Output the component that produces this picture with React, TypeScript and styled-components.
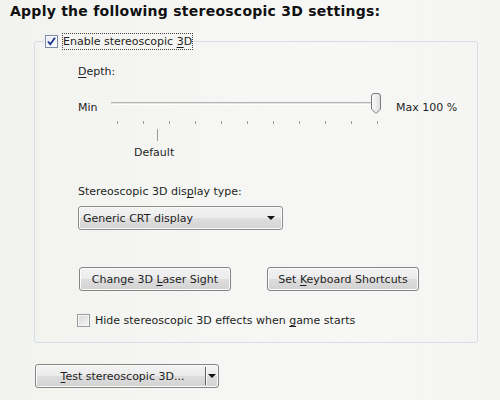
import styled, { createGlobalStyle } from 'styled-components';

const GlobalStyle = createGlobalStyle`
  html, body {
    margin: 0;
    padding: 0;
  }

  body {
    background: linear-gradient(to right, #f2f3ef 0%, #f6f7f4 45%, #f7f8f5 70%, #f4f5f2 100%);
    font-family: "DejaVu Sans", "Liberation Sans", sans-serif;
    font-size: 11px;
    color: #1e1f24;
  }
`;

const Page = styled.div`
  width: 500px;
  height: 400px;
  box-sizing: border-box;
  padding: 3px 0 0 10px;
  overflow: hidden;
`;

const Heading = styled.h1`
  margin: 0;
  font-size: 14px;
  line-height: 17px;
  font-weight: bold;
  letter-spacing: 0.25px;
  color: #111;
`;

const Group = styled.fieldset`
  margin: 13px 0 0 24px;
  padding: 0;
  width: 444px;
  height: 310px;
  box-sizing: border-box;
  border: 1px solid #d5dee5;
  border-radius: 3px;
  min-inline-size: 0;
`;

const Legend = styled.legend`
  margin-left: 9px;
  padding: 0 1px;
  display: flex;
  align-items: center;
`;

const Box = styled.span<{ $checked?: boolean }>`
  width: 13px;
  height: 13px;
  box-sizing: border-box;
  flex-shrink: 0;
  display: flex;
  align-items: center;
  justify-content: center;
  border: 1px solid ${({ $checked }) => ($checked ? '#7d8ca8' : '#9a9a9a')};
  background: ${({ $checked }) =>
    $checked
      ? 'linear-gradient(135deg, #e3eaf3, #ffffff)'
      : 'linear-gradient(135deg, #d8d8d8, #f4f4f4)'};
  box-shadow: inset 0 0 0 1px #f6f8fb;
`;

const FocusLabel = styled.span`
  margin-left: 4px;
  padding: 1px 0;
  border: 1px dotted #444;
  line-height: 13px;
  white-space: nowrap;
`;

const Body = styled.div`
  padding: 15px 0 0 43px;
  display: flex;
  flex-direction: column;
  align-items: flex-start;
`;

const Label = styled.div<{ $top: number; $left?: number }>`
  margin-top: ${({ $top }) => $top}px;
  margin-left: ${({ $left }) => $left ?? 0}px;
  line-height: 13px;
  white-space: nowrap;
`;

const Key = styled.u`
  text-decoration-thickness: 1px;
  text-underline-offset: 2px;
`;

const SliderRow = styled.div`
  margin-top: 15px;
  height: 22px;
  display: flex;
`;

const SliderText = styled.span<{ $width?: number; $gap?: number }>`
  margin-top: 8px;
  width: ${({ $width }) => ($width ? `${$width}px` : 'auto')};
  margin-left: ${({ $gap }) => $gap ?? 0}px;
  line-height: 13px;
  white-space: nowrap;
`;

const Track = styled.div`
  position: relative;
  width: 271px;
  height: 22px;
`;

const TrackLine = styled.div`
  margin-top: 9px;
  width: 266px;
  height: 1px;
  border-top: 1px solid #b3b3b3;
  border-bottom: 1px solid #ffffff;
  background: #e4e4e4;
`;

const ThumbWrap = styled.div`
  position: absolute;
  right: 0;
  top: 0;
  width: 12px;
  height: 22px;
`;

const Ticks = styled.div`
  margin: 6px 0 0 39px;
  width: 261px;
  display: flex;
  justify-content: space-between;
`;

const Tick = styled.span<{ $long?: boolean }>`
  width: 1px;
  height: ${({ $long }) => ($long ? 12 : 3)}px;
  background: #9c9c9c;
`;

const DefaultTick = styled(Tick)`
  margin: 5px 0 0 79px;
`;

const Combo = styled.div`
  margin-top: 8px;
  width: 205px;
  height: 24px;
  box-sizing: border-box;
  padding: 0 7px 0 4px;
  display: flex;
  align-items: center;
  justify-content: space-between;
  border: 1px solid #8c8c8c;
  border-radius: 3px;
  background: linear-gradient(#f3f3f3 0%, #ececec 48%, #dedede 52%, #d4d4d4 100%);
  box-shadow: inset 0 0 0 1px #fafafa;
`;

const Arrow = styled.span`
  width: 0;
  height: 0;
  border-left: 4px solid transparent;
  border-right: 4px solid transparent;
  border-top: 4px solid #111;
`;

const ButtonRow = styled.div`
  margin: 37px 0 0 1px;
  display: flex;
  gap: 36px;
`;

const Button = styled.div<{ $width: number }>`
  width: ${({ $width }) => $width}px;
  height: 24px;
  box-sizing: border-box;
  display: flex;
  align-items: center;
  justify-content: center;
  border: 1px solid #858585;
  border-radius: 3px;
  background: linear-gradient(#f3f3f3 0%, #ebebeb 48%, #dddddd 52%, #d2d2d2 100%);
  box-shadow: inset 0 0 0 1px #fbfbfb;
  white-space: nowrap;
`;

const CheckRow = styled.div`
  margin: 23px 0 0 -1px;
  display: flex;
  align-items: center;
  gap: 5px;
  line-height: 13px;
`;

const SplitButton = styled(Button)`
  margin: 21px 0 0 25px;
  justify-content: flex-start;
  padding: 0;
`;

const SplitMain = styled.span`
  width: 169px;
  text-align: center;
  padding-left: 4px;
  box-sizing: border-box;
`;

const SplitDivider = styled.span`
  width: 1px;
  height: 18px;
  background: #5e5e5e;
  box-shadow: 1px 0 0 #fcfcfc;
`;

const SplitArrow = styled.span`
  flex: 1;
  display: flex;
  justify-content: center;
`;

const Check = () => (
  <svg width="11" height="11" viewBox="0 0 11 11">
    <path d="M2 5.5 L4.3 8.3 L9 1.8" fill="none" stroke="#22388a" strokeWidth="1.9" />
  </svg>
);

const Thumb = () => (
  <svg width="12" height="22" viewBox="0 0 12 22">
    <defs>
      <linearGradient id="th" x1="0" y1="0" x2="1" y2="0">
        <stop offset="0" stopColor="#fdfdfd" />
        <stop offset="1" stopColor="#dedede" />
      </linearGradient>
    </defs>
    <path
      d="M1.5 3 Q1.5 0.5 4 0.5 L8 0.5 Q10.5 0.5 10.5 3 L10.5 16 L6 20.5 L1.5 16 Z"
      fill="url(#th)"
      stroke="#7a7a7a"
    />
  </svg>
);

export default function App() {
  const ticks = Array.from({ length: 11 });
  return (
    <Page>
      <GlobalStyle />
      <Heading>Apply the following stereoscopic 3D settings:</Heading>
      <Group>
        <Legend>
          <Box $checked>
            <Check />
          </Box>
          <FocusLabel>
            Enable stereoscopic <Key>3</Key>D
          </FocusLabel>
        </Legend>
        <Body>
          <Label $top={0}>
            <Key>D</Key>epth:
          </Label>
          <SliderRow>
            <SliderText $width={33}>Min</SliderText>
            <Track>
              <TrackLine />
              <ThumbWrap>
                <Thumb />
              </ThumbWrap>
            </Track>
            <SliderText $gap={14}>Max 100 %</SliderText>
          </SliderRow>
          <Ticks>
            {ticks.map((_, i) => (
              <Tick key={i} />
            ))}
          </Ticks>
          <DefaultTick $long />
          <Label $top={5} $left={56}>
            Default
          </Label>
          <Label $top={26}>
            Stereoscopic 3D dis<Key>p</Key>lay type:
          </Label>
          <Combo>
            <span>Generic CRT display</span>
            <Arrow />
          </Combo>
          <ButtonRow>
            <Button $width={152}>
              <span>
                Change 3D <Key>L</Key>aser Sight
              </span>
            </Button>
            <Button $width={152}>
              <span>
                Set <Key>K</Key>eyboard Shortcuts
              </span>
            </Button>
          </ButtonRow>
          <CheckRow>
            <Box />
            <span>
              Hide stereoscopic 3D effects when <Key>g</Key>ame starts
            </span>
          </CheckRow>
        </Body>
      </Group>
      <SplitButton $width={184}>
        <SplitMain>
          <Key>T</Key>est stereoscopic 3D...
        </SplitMain>
        <SplitDivider />
        <SplitArrow>
          <Arrow />
        </SplitArrow>
      </SplitButton>
    </Page>
  );
}
